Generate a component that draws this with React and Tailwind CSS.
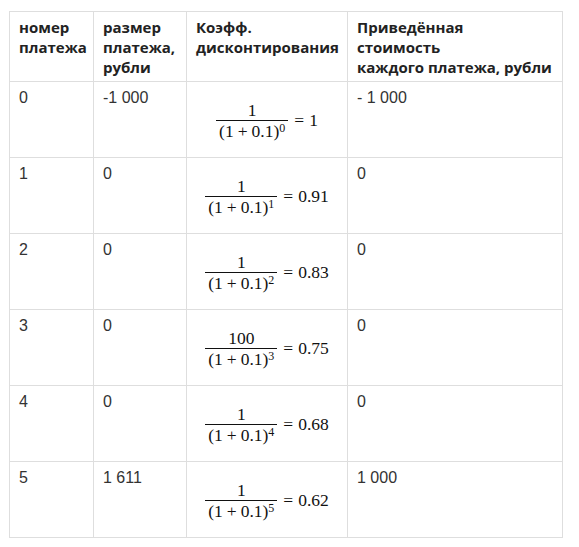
const rows = [
  { n: '0', pay: '-1 000', num: '1', exp: '0', res: '1', pv: '- 1 000' },
  { n: '1', pay: '0', num: '1', exp: '1', res: '0.91', pv: '0' },
  { n: '2', pay: '0', num: '1', exp: '2', res: '0.83', pv: '0' },
  { n: '3', pay: '0', num: '100', exp: '3', res: '0.75', pv: '0' },
  { n: '4', pay: '0', num: '1', exp: '4', res: '0.68', pv: '0' },
  { n: '5', pay: '1 611', num: '1', exp: '5', res: '0.62', pv: '1 000' },
];

function Formula({ num, exp, res }) {
  return (
    <span className="inline-flex items-center font-['Liberation_Serif','DejaVu_Serif',serif] text-[17.5px] text-[#111]">
      <span className="inline-flex flex-col items-center">
        <span className="px-[2px] leading-[19px]">{num}</span>
        <span className="w-full h-px bg-[#111]" />
        <span className="px-[3px] leading-[21px] whitespace-nowrap">
          (1<span className="mx-[4px]">+</span>0.1)<sup className="text-[12px] -top-[5px]">{exp}</sup>
        </span>
      </span>
      <span className="ml-[6px] -mt-[2px] whitespace-nowrap">=<span className="ml-[5px]">{res}</span></span>
    </span>
  );
}

export default function App() {
  const th = "border border-[#dedede] align-top text-left px-[9px] pt-[5px] pb-[4px] font-['Open_Sans',sans-serif] font-bold text-[15px] leading-[20px] text-[#222] whitespace-nowrap";
  const td = "border border-[#dedede] align-top px-[9px] pt-[6px] font-['Liberation_Sans',Arial,sans-serif] text-[16px] leading-[20px] text-[#333]";
  return (
    <div className="w-[579px] h-[547px] bg-white pt-[11px] pl-[9px]">
      <table className="border-collapse table-fixed w-[553px]">
        <colgroup>
          <col className="w-[84px]" />
          <col className="w-[93px]" />
          <col className="w-[161px]" />
          <col className="w-[215px]" />
        </colgroup>
        <thead>
          <tr className="h-[69px]">
            <th className={th}>номер<br />платежа</th>
            <th className={th}>размер<br />платежа,<br />рубли</th>
            <th className={th}>Коэфф.<br />дисконтирования</th>
            <th className={th}>Приведённая<br />стоимость<br />каждого платежа, рубли</th>
          </tr>
        </thead>
        <tbody>
          {rows.map(r => (
            <tr key={r.n} className="h-[76px]">
              <td className={td}>{r.n}</td>
              <td className={td}>{r.pay}</td>
              <td className="border border-[#dedede] align-middle text-center">
                <Formula num={r.num} exp={r.exp} res={r.res} />
              </td>
              <td className={td}>{r.pv}</td>
            </tr>
          ))}
        </tbody>
      </table>
    </div>
  );
}
